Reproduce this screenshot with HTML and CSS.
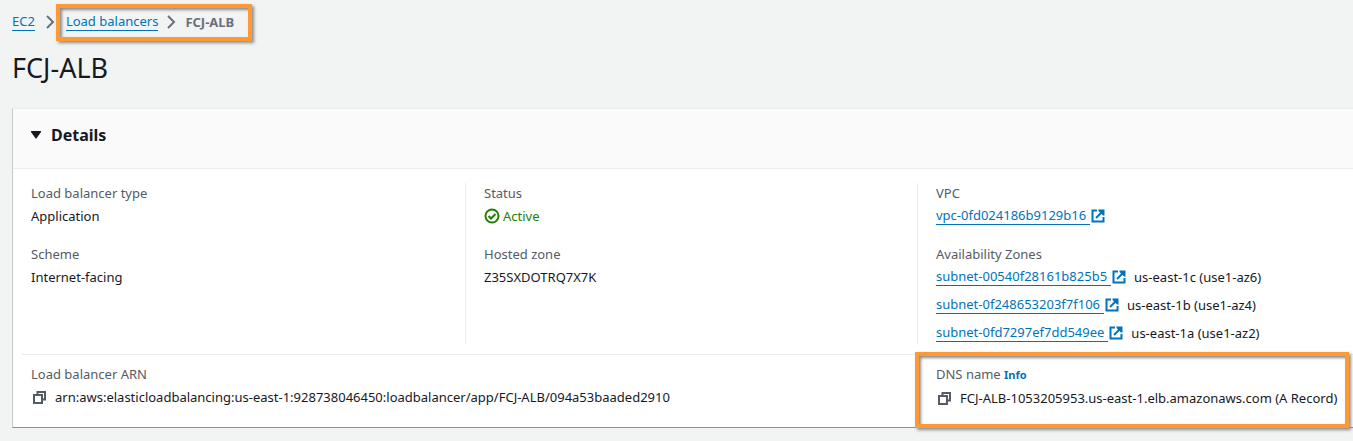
FILE: index.html
```html
<!DOCTYPE html>
<html lang="en">
<head>
<meta charset="utf-8">
<title>FCJ-ALB | Load balancers</title>
<link rel="stylesheet" href="styles.css">
</head>
<body>
<svg class="defs" aria-hidden="true">
  <symbol id="chevron" viewBox="0 0 9 14"><path d="M1 1l6 6-6 6" fill="none" stroke="#687078" stroke-width="2"/></symbol>
  <symbol id="external" viewBox="0 0 14 14"><path d="M6 1.500H1.500v11h11V8" fill="none" stroke="#0073bb" stroke-width="2"/><path d="M5 9l6-6" stroke="#0073bb" stroke-width="2"/><path d="M7.500 .500h6v6h-1.500L7.500 2z" fill="#0073bb"/></symbol>
  <symbol id="copy" viewBox="0 0 14 14"><path d="M1 5h8v8H1zM4.500 4.500V2H12v7.500H9.500" fill="none" stroke="#545b64" stroke-width="2"/></symbol>
</svg>
<nav class="breadcrumbs" aria-label="Breadcrumbs">
  <a class="link" href="#">EC2</a>
  <svg class="chevron"><use href="#chevron"/></svg>
  <div class="trail">
    <a class="link" href="#">Load balancers</a>
    <svg class="chevron"><use href="#chevron"/></svg>
    <span class="current">FCJ-ALB</span>
    <div class="highlight highlight-trail"></div>
  </div>
</nav>
<main>
  <h1 class="title">FCJ-ALB</h1>
  <section class="panel">
    <button class="panel-header" type="button" aria-expanded="true">
      <svg class="caret" viewBox="0 0 10 8"><path d="M0 0h10v1L5 8 0 1z" fill="#16191f"/></svg>
      <span>Details</span>
    </button>
    <div class="columns">
      <dl class="column">
        <div class="field"><dt>Load balancer type</dt><dd>Application</dd></div>
        <div class="field"><dt>Scheme</dt><dd>Internet-facing</dd></div>
      </dl>
      <dl class="column">
        <div class="field"><dt>Status</dt><dd class="status"><svg class="status-icon" viewBox="0 0 16 16"><g fill="none" stroke="#1d8102" stroke-width="2"><circle cx="8" cy="8" r="6.500"/><path d="M4.500 8L7 10.500 11.500 6"/></g></svg>Active</dd></div>
        <div class="field"><dt>Hosted zone</dt><dd>Z35SXDOTRQ7X7K</dd></div>
      </dl>
      <dl class="column">
        <div class="field"><dt>VPC</dt><dd class="resource"><a class="link" href="#">vpc-0fd024186b9129b16</a><svg class="icon"><use href="#external"/></svg></dd></div>
        <div class="field"><dt>Availability Zones</dt>
          <dd class="resource"><a class="link" href="#">subnet-00540f28161b825b5</a><svg class="icon"><use href="#external"/></svg><span class="zone">us-east-1c (use1-az6)</span></dd>
          <dd class="resource"><a class="link" href="#">subnet-0f248653203f7f106</a><svg class="icon"><use href="#external"/></svg><span class="zone">us-east-1b (use1-az4)</span></dd>
          <dd class="resource"><a class="link" href="#">subnet-0fd7297ef7dd549ee</a><svg class="icon"><use href="#external"/></svg><span class="zone">us-east-1a (use1-az2)</span></dd>
        </div>
      </dl>
    </div>
    <dl class="footer-row">
      <div class="footer-cell arn"><dt>Load balancer ARN</dt><dd class="copyable"><button class="copy" type="button" aria-label="Copy ARN"><svg class="icon"><use href="#copy"/></svg></button><span>arn:aws:elasticloadbalancing:us-east-1:928738046450:loadbalancer/app/FCJ-ALB/094a53baaded2910</span></dd></div>
      <div class="footer-cell dns"><dt>DNS name <a class="info" href="#">Info</a></dt><dd class="copyable"><button class="copy" type="button" aria-label="Copy DNS name"><svg class="icon"><use href="#copy"/></svg></button><span>FCJ-ALB-1053205953.us-east-1.elb.amazonaws.com (A Record)</span></dd>
        <div class="highlight highlight-dns"></div>
      </div>
    </dl>
  </section>
</main>
</body>
</html>
```
FILE: styles.css
```css
* { box-sizing: border-box; }
body {
  margin: 0;
  padding: 11px 0 14px 12px;
  background: #f2f3f3;
  color: #16191f;
  font: 13px/22px "Noto Sans", "Open Sans", sans-serif;
  overflow-x: hidden;
}
.defs { position: absolute; width: 0; height: 0; }
.breadcrumbs, .trail { display: flex; align-items: center; }
.breadcrumbs { gap: 11px; }
.trail { position: relative; gap: 9px; }
.chevron { width: 9px; height: 14px; }
.link {
  color: #0073bb;
  text-decoration: none;
  line-height: 17px;
  border-bottom: 1px solid #0073bb;
}
.current { color: #687078; font-weight: 700; }
.title { margin: 17px 0 22px; font-size: 27px; line-height: 36px; font-weight: 400; }
.panel {
  background: #fff;
  border: 1px solid #eaeded;
  border-left-color: #c4c9cb;
  border-bottom-color: #879196;
  border-right: 0;
}
.panel-header {
  display: flex;
  align-items: center;
  gap: 10px;
  width: 100%;
  height: 60px;
  padding: 0 18px 8px;
  border: 0;
  border-bottom: 1px solid #eaeded;
  background: #fafafa;
  color: #16191f;
  font: 700 16px/22px "Noto Sans", "Open Sans", sans-serif;
}
.caret { width: 10px; height: 8px; }
.columns {
  display: grid;
  grid-template-columns: 452fr 452fr 436fr;
  padding: 14px 0 10px;
}
dl, dd { margin: 0; }
.column { display: flex; flex-direction: column; gap: 17px; padding-left: 18px; }
.column + .column { border-left: 1px solid #eaeded; }
dt { color: #545b64; line-height: 20px; margin-bottom: 2px; }
dd + dd { margin-top: 6px; }
.status, .resource, .copyable { display: flex; align-items: center; min-height: 22px; }
.status { gap: 3px; color: #1d8102; }
.status-icon { width: 16px; height: 16px; }
.resource .link { padding-right: 4px; }
.resource { gap: 1px; }
.icon { display: block; flex: none; width: 14px; height: 14px; }
.zone { margin-left: 7px; }
.footer-row {
  display: grid;
  grid-template-columns: 895fr 436fr;
  margin-left: 9px;
  border-top: 1px solid #eaeded;
}
.footer-cell { padding: 9px 0 18px 9px; white-space: nowrap; }
.dns { position: relative; padding-left: 19px; }
.copyable { gap: 8px; }
.copy { padding: 0 0 0 2px; border: 0; background: none; }
.info { color: #0073bb; font-size: 11px; font-weight: 700; text-decoration: none; }
.highlight {
  position: absolute;
  border: 4px solid #ff9933;
  box-shadow: 2px 2px 3px #8c8c8c, inset 2px 2px 3px #8c8c8c;
  pointer-events: none;
}
.highlight-trail { inset: -7px -18px -8px -10px; }
.highlight-dns { inset: -3px 4px -1px -2px; }
```
